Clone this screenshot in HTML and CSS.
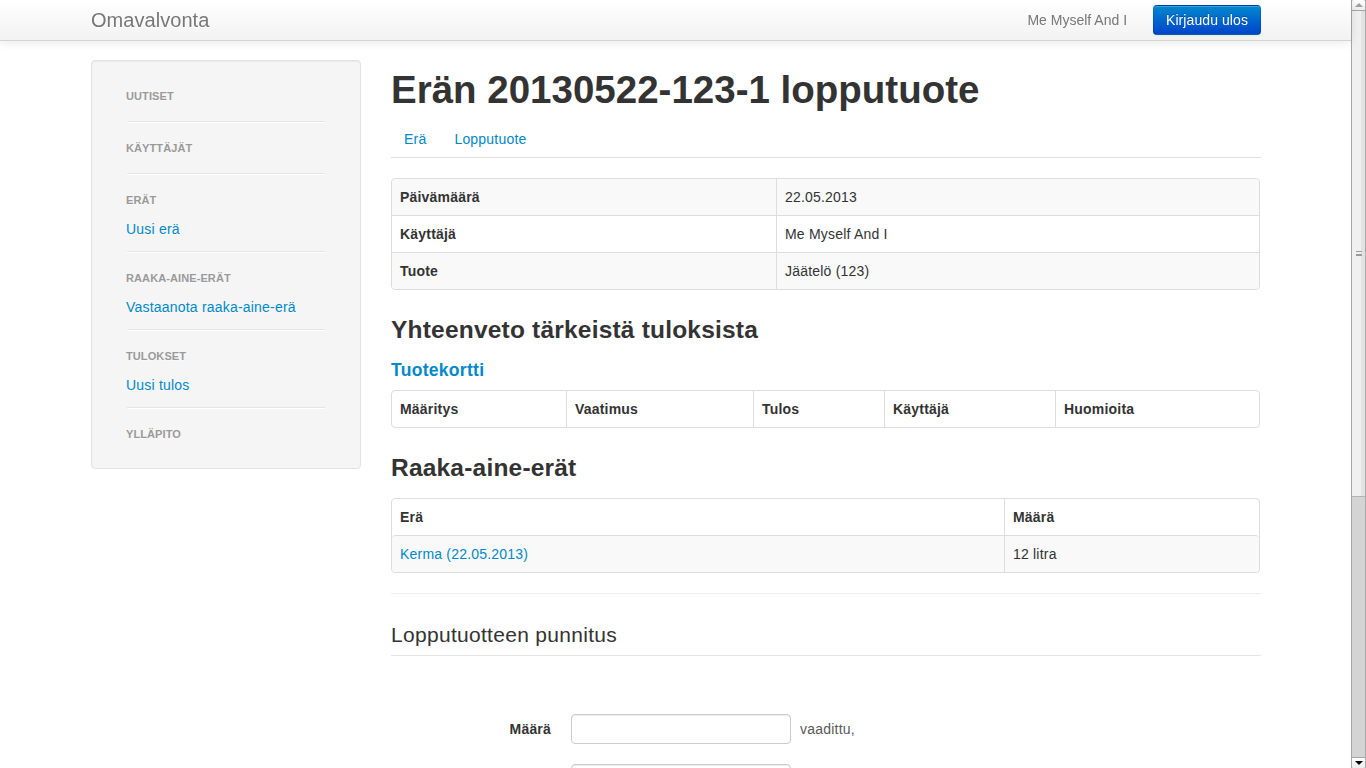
FILE: index.html
```html
<!DOCTYPE html>
<html lang="fi">
<head>
<meta charset="utf-8">
<title>Omavalvonta</title>
<link rel="stylesheet" href="styles.css">
</head>
<body>
<div class="page">
  <header class="navbar">
    <div class="container navbar-inner">
      <a class="brand" href="#">Omavalvonta</a>
      <div class="navbar-right">
        <span class="navbar-text">Me Myself And I</span>
        <a class="btn btn-primary" href="#">Kirjaudu ulos</a>
      </div>
    </div>
  </header>

  <div class="container layout">
    <aside class="well">
      <ul class="nav-list">
        <li class="nav-header">Uutiset</li>
        <li class="divider"></li>
        <li class="nav-header">Käyttäjät</li>
        <li class="divider"></li>
        <li class="nav-header">Erät</li>
        <li><a href="#">Uusi erä</a></li>
        <li class="divider"></li>
        <li class="nav-header">Raaka-aine-erät</li>
        <li><a href="#">Vastaanota raaka-aine-erä</a></li>
        <li class="divider"></li>
        <li class="nav-header">Tulokset</li>
        <li><a href="#">Uusi tulos</a></li>
        <li class="divider"></li>
        <li class="nav-header">Ylläpito</li>
      </ul>
    </aside>

    <main class="content">
      <h1>Erän 20130522-123-1 lopputuote</h1>

      <ul class="nav-tabs">
        <li><a href="#">Erä</a></li>
        <li><a href="#">Lopputuote</a></li>
      </ul>

      <table class="table">
        <tbody>
          <tr><th class="c-key">Päivämäärä</th><td>22.05.2013</td></tr>
          <tr><th>Käyttäjä</th><td>Me Myself And I</td></tr>
          <tr><th>Tuote</th><td>Jäätelö (123)</td></tr>
        </tbody>
      </table>

      <h3>Yhteenveto tärkeistä tuloksista</h3>
      <h4><a href="#">Tuotekortti</a></h4>
      <table class="table">
        <thead>
          <tr>
            <th class="c-def">Määritys</th>
            <th class="c-req">Vaatimus</th>
            <th class="c-res">Tulos</th>
            <th class="c-user">Käyttäjä</th>
            <th>Huomioita</th>
          </tr>
        </thead>
      </table>

      <h3>Raaka-aine-erät</h3>
      <table class="table">
        <thead>
          <tr><th class="c-batch">Erä</th><th>Määrä</th></tr>
        </thead>
        <tbody>
          <tr><td><a href="#">Kerma (22.05.2013)</a></td><td>12 litra</td></tr>
        </tbody>
      </table>

      <hr>

      <form class="form-horizontal">
        <h2 class="legend">Lopputuotteen punnitus</h2>
        <div class="form-body">
          <div class="control-group">
            <label class="control-label" for="maara">Määrä</label>
            <div class="controls">
              <input type="text" id="maara"> <span class="help-inline">vaadittu,</span>
            </div>
          </div>
          <div class="control-group">
            <label class="control-label" for="pvm">Päivämäärä</label>
            <div class="controls">
              <input type="text" id="pvm">
            </div>
          </div>
        </div>
      </form>
    </main>
  </div>
</div>

<div class="scrollbar" aria-hidden="true">
  <div class="sb-btn sb-up"><span class="tri-up"></span></div>
  <div class="sb-thumb"><span class="grip"></span></div>
  <div class="sb-track"></div>
  <div class="sb-btn sb-down"><span class="tri-down"></span></div>
</div>
</body>
</html>
```

FILE: styles.css
```css
html {
  overflow: hidden;
}

body {
  margin: 0;
  font-family: "Liberation Sans", Arial, sans-serif;
  font-size: 14px;
  line-height: 20px;
  letter-spacing: 0.2px;
  color: #333;
  background: #fff;
}

a {
  color: #0088cc;
  text-decoration: none;
}

.page {
  margin-right: 15px;
  padding-left: 1px;
}

.container {
  width: 1170px;
  margin: 0 auto;
}

/* Navbar */
.navbar {
  margin-left: -1px;
  background: linear-gradient(to bottom, #ffffff, #f2f2f2);
  border-bottom: 1px solid #d4d4d4;
  box-shadow: 0 1px 10px rgba(0, 0, 0, 0.1);
  position: relative;
  z-index: 2;
}

.navbar-inner {
  height: 40px;
  display: flex;
  align-items: center;
  justify-content: space-between;
  padding-left: 1px;
}

.brand {
  display: block;
  padding: 10px 20px;
  margin-left: -20px;
  font-size: 20px;
  line-height: 20px;
  font-weight: 200;
  letter-spacing: 0.05px;
  color: #777;
  text-shadow: 0 1px 0 #fff;
}

.navbar-right {
  display: flex;
  align-items: center;
  gap: 26px;
}

.navbar-text {
  color: #777;
  line-height: 40px;
  letter-spacing: 0;
}

.btn {
  display: inline-block;
  padding: 4px 12px;
  font-size: 14px;
  line-height: 20px;
  letter-spacing: 0.08px;
  border-radius: 4px;
  border: 1px solid;
}

.btn-primary {
  color: #fff;
  text-shadow: 0 -1px 0 rgba(0, 0, 0, 0.25);
  background: linear-gradient(to bottom, #0088cc, #0044cc);
  border-color: rgba(0, 0, 0, 0.1) rgba(0, 0, 0, 0.1) rgba(0, 0, 0, 0.25);
  box-shadow: inset 0 1px 0 rgba(255, 255, 255, 0.2), 0 1px 2px rgba(0, 0, 0, 0.05);
}

/* Layout */
.layout {
  display: grid;
  grid-template-columns: 270px 870px;
  column-gap: 30px;
  align-items: start;
  padding-top: 19px;
}

/* Sidebar */
.well {
  box-sizing: border-box;
  background: #f5f5f5;
  border: 1px solid #e3e3e3;
  border-radius: 4px;
  box-shadow: inset 0 1px 1px rgba(0, 0, 0, 0.05);
  padding: 22px 19px 21px;
}

.nav-list {
  list-style: none;
  margin: 0;
  padding: 0 15px;
}

.nav-list > li > a,
.nav-list .nav-header {
  display: block;
  margin: 0 -15px;
  padding: 3px 15px;
  line-height: 20px;
  text-shadow: 0 1px 0 rgba(255, 255, 255, 0.5);
}

.nav-list > li > a {
  padding: 6px 15px 0;
}

.nav-list .nav-header {
  font-size: 11px;
  font-weight: bold;
  letter-spacing: 0.1px;
  color: #999;
  text-transform: uppercase;
}

.nav-list .divider {
  height: 1px;
  margin: 12px 1px;
  overflow: hidden;
  background: #e5e5e5;
  border-bottom: 1px solid #fff;
}

/* Content */
.content h1 {
  font-size: 38.5px;
  line-height: 40px;
  margin: 10px 0;
  font-weight: bold;
  letter-spacing: 0;
}

.content h3 {
  font-size: 24.5px;
  line-height: 40px;
  margin: 10px 0;
  font-weight: bold;
  letter-spacing: 0.2px;
}

.content h4 {
  font-size: 17.5px;
  line-height: 20px;
  margin: 10px 0;
  font-weight: bold;
  letter-spacing: 0.3px;
}

.nav-tabs {
  display: flex;
  list-style: none;
  margin: 0 0 20px;
  padding: 0;
  border-bottom: 1px solid #ddd;
}

.nav-tabs > li {
  margin-bottom: -1px;
}

.nav-tabs > li > a {
  display: block;
  padding: 8px 12px;
  margin-right: 2px;
  line-height: 20px;
  border: 1px solid transparent;
  border-radius: 4px 4px 0 0;
}

/* Tables */
.table {
  width: 869px;
  table-layout: fixed;
  border-collapse: separate;
  border-spacing: 0;
  border: 1px solid #ddd;
  border-radius: 4px;
  margin-bottom: 20px;
}

.table th,
.table td {
  box-sizing: border-box;
  padding: 8px;
  line-height: 20px;
  text-align: left;
  vertical-align: top;
  border-top: 1px solid #ddd;
  border-left: 1px solid #ddd;
}

.table th {
  font-weight: bold;
}

.table tr > :first-child {
  border-left: 0;
}

.table > :first-child > tr:first-child > th,
.table > :first-child > tr:first-child > td {
  border-top: 0;
}

.table tbody > tr:nth-child(odd) > td,
.table tbody > tr:nth-child(odd) > th {
  background: #f9f9f9;
}

.table tr:first-child > :first-child { border-top-left-radius: 4px; }
.table tr:first-child > :last-child { border-top-right-radius: 4px; }
.table tr:last-child > :first-child { border-bottom-left-radius: 4px; }
.table tr:last-child > :last-child { border-bottom-right-radius: 4px; }

.c-key { width: 384px; }
.c-def { width: 174px; }
.c-req { width: 187px; }
.c-res { width: 131px; }
.c-user { width: 171px; }
.c-batch { width: 612px; }

hr {
  margin: 20px 0;
  border: 0;
  border-top: 1px solid #eee;
  border-bottom: 1px solid #fff;
}

/* Form */
.legend {
  margin: 0 0 20px;
  padding: 0;
  font-size: 21px;
  font-weight: normal;
  line-height: 40px;
  letter-spacing: 0.3px;
  color: #333;
  border-bottom: 1px solid #e5e5e5;
}

.form-body {
  padding-top: 38px;
}

.control-group {
  display: flex;
  margin-bottom: 20px;
}

.control-label {
  width: 160px;
  flex: none;
  padding-top: 5px;
  text-align: right;
  font-weight: bold;
}

.controls {
  margin-left: 20px;
}

.controls input {
  box-sizing: content-box;
  width: 206px;
  height: 20px;
  padding: 4px 6px;
  font: 14px/20px "Liberation Sans", Arial, sans-serif;
  color: #555;
  border: 1px solid #ccc;
  border-radius: 4px;
  box-shadow: inset 0 1px 1px rgba(0, 0, 0, 0.075);
  vertical-align: middle;
  margin: 0;
}

.help-inline {
  display: inline-block;
  padding-left: 5px;
  color: #595959;
  vertical-align: middle;
}

/* Fake scrollbar */
.scrollbar {
  position: fixed;
  top: 0;
  right: 0;
  width: 15px;
  height: 100vh;
  box-sizing: border-box;
  border-left: 1px solid #a6a6a6;
  border-right: 1px solid #a6a6a6;
  background: #d4d4d4;
  display: flex;
  flex-direction: column;
}

.sb-btn {
  height: 10px;
  flex: none;
  background: linear-gradient(to bottom, #ffffff, #ededed);
  display: flex;
  align-items: center;
  justify-content: center;
}

.sb-up {
  border-bottom: 1px solid #a6a6a6;
  border-radius: 2px 2px 0 0;
}

.sb-down {
  border-top: 1px solid #a6a6a6;
  border-radius: 0 0 2px 2px;
}

.tri-up {
  width: 0;
  height: 0;
  border-left: 4px solid transparent;
  border-right: 4px solid transparent;
  border-bottom: 4px solid #a0a0a0;
}

.tri-down {
  width: 0;
  height: 0;
  border-left: 4px solid transparent;
  border-right: 4px solid transparent;
  border-top: 4px solid #000;
}

.sb-thumb {
  height: 485px;
  flex: none;
  background: linear-gradient(to right, #f0f0f0 0, #f0f0f0 70%, #e2e2e2 70%, #e2e2e2 100%);
  border-bottom: 1px solid #b4b4b4;
  display: flex;
  align-items: center;
  justify-content: center;
}

.grip {
  width: 6px;
  height: 5px;
  border-top: 1px solid #9a9a9a;
  border-bottom: 1px solid #9a9a9a;
  background: linear-gradient(to bottom, transparent 2px, #9a9a9a 2px, #9a9a9a 3px, transparent 3px);
  box-sizing: border-box;
}

.sb-track {
  flex: 1;
}
```
